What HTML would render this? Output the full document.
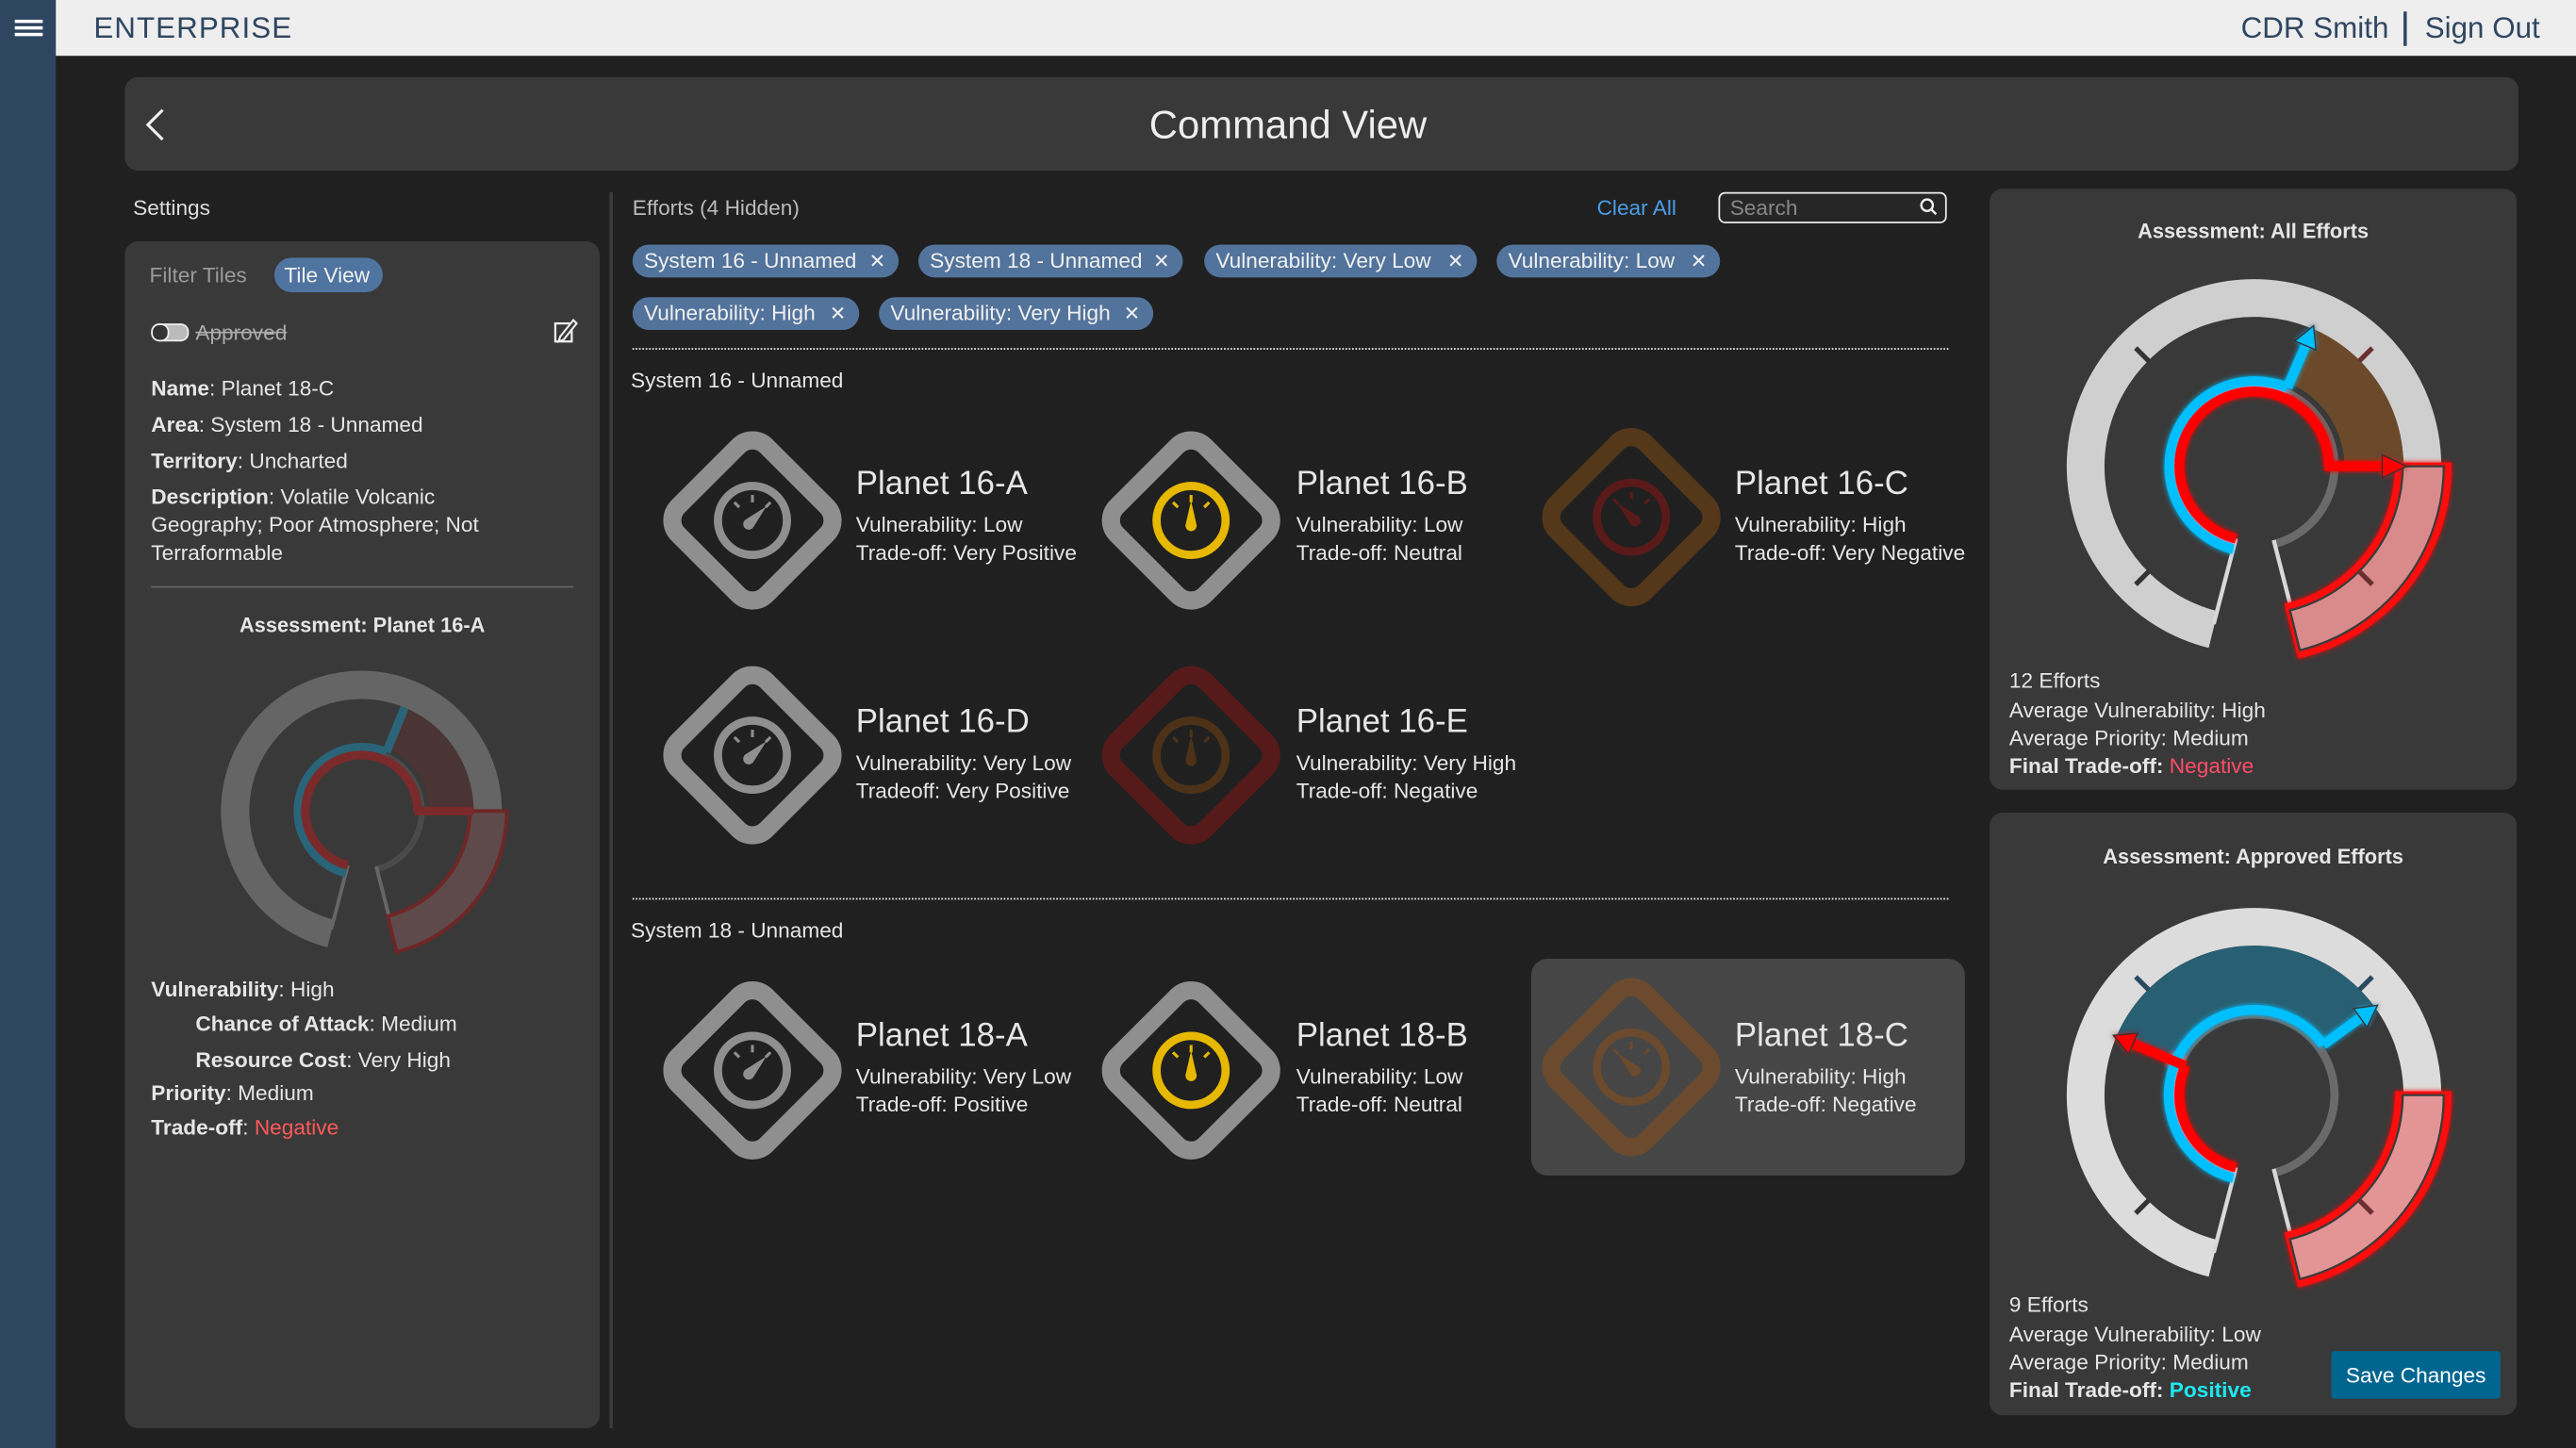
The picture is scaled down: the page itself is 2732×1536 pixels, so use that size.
<!DOCTYPE html>
<html><head><meta charset="utf-8">
<style>
html,body{margin:0;padding:0;background:#202020;width:2732px;height:1536px;overflow:hidden}
#r{position:absolute;left:0;top:0;width:1568px;height:882px;transform:scale(1.74235,1.7415);transform-origin:0 0;background:#202020;font-family:"Liberation Sans",sans-serif;color:#e6e6e6}
.a{position:absolute;white-space:nowrap;line-height:1}
.s13{font-size:13px}
b{font-weight:bold}
.tag{position:absolute;height:20px;line-height:20px;background:#52739b;border-radius:10px;color:#f0f0f0;font-size:13px;padding-left:7px;box-sizing:border-box}
.tag i{font-style:normal;position:absolute;right:8px;top:0;font-size:12px}
.card{position:absolute;background:#393939;border-radius:8px}
</style></head><body><div id="r">
<div style="position:absolute;left:0;top:0;width:1568px;height:34px;background:#eeeeee"></div>
<div style="position:absolute;left:0;top:0;width:34px;height:882px;background:#2f4661"></div>
<div style="position:absolute;left:9px;top:12px;width:17px;height:1.5px;background:#fff"></div>
<div style="position:absolute;left:9px;top:16px;width:17px;height:1.5px;background:#fff"></div>
<div style="position:absolute;left:9px;top:20px;width:17px;height:1.5px;background:#fff"></div>
<div class="a" style="left:57px;top:8px;font-size:18px;color:#2f4661;letter-spacing:0.6px">ENTERPRISE</div>
<div class="a" style="left:1364px;top:8px;font-size:18px;color:#2f4661">CDR Smith</div>
<div style="position:absolute;left:1463px;top:7px;width:1.5px;height:21px;background:#2f4661"></div>
<div class="a" style="left:1476px;top:8px;font-size:18px;color:#2f4661">Sign Out</div>

<div class="card" style="left:76px;top:47px;width:1457px;height:57px"></div>
<div class="a" style="left:0;width:1568px;text-align:center;top:65px;font-size:24px;color:#eee">Command View</div>

<div class="a s13" style="left:81px;top:120px;color:#ddd">Settings</div>
<div class="card" style="left:76px;top:147px;width:289px;height:723px"></div>
<div style="position:absolute;left:371px;top:117px;width:2px;height:753px;background:#3c3c3c"></div>

<div class="a s13" style="left:91px;top:161px;color:#9a9a9a">Filter Tiles</div>
<div style="position:absolute;left:167px;top:157px;width:66px;height:21px;border-radius:11px;background:#4f74a0"></div>
<div class="a s13" style="left:173px;top:161px;color:#f2f2f2">Tile View</div>
<div style="position:absolute;left:92px;top:197px;width:21px;height:9px;border-radius:5px;background:#bbb;border:1px solid #eee"></div>
<div style="position:absolute;left:92px;top:197px;width:9px;height:9px;border-radius:5px;background:#333;border:1px solid #eee"></div>
<div class="a s13" style="left:119px;top:196px;color:#aaa;text-decoration:line-through">Approved</div>

<div class="a s13" style="left:92px;top:230px"><b>Name</b>: Planet 18-C</div>
<div class="a s13" style="left:92px;top:252px"><b>Area</b>: System 18 - Unnamed</div>
<div class="a s13" style="left:92px;top:274px"><b>Territory</b>: Uncharted</div>
<div class="a s13" style="left:92px;top:296px"><b>Description</b>: Volatile Volcanic</div>
<div class="a s13" style="left:92px;top:313px">Geography; Poor Atmosphere; Not</div>
<div class="a s13" style="left:92px;top:330px">Terraformable</div>
<div style="position:absolute;left:92px;top:357px;width:257px;height:1px;background:#666"></div>
<div class="a" style="left:76px;width:289px;text-align:center;top:375px;font-size:12.5px;font-weight:bold">Assessment: Planet 16-A</div>
<div class="a s13" style="left:92px;top:596px"><b>Vulnerability</b>: High</div>
<div class="a s13" style="left:119px;top:617px"><b>Chance of Attack</b>: Medium</div>
<div class="a s13" style="left:119px;top:639px"><b>Resource Cost</b>: Very High</div>
<div class="a s13" style="left:92px;top:659px"><b>Priority</b>: Medium</div>
<div class="a s13" style="left:92px;top:680px"><b>Trade-off</b>: <span style="color:#ff5a5a">Negative</span></div>

<div class="a s13" style="left:385px;top:120px;color:#bbb">Efforts (4 Hidden)</div>
<div class="a s13" style="left:972px;top:120px;color:#4a9ee8">Clear All</div>
<div style="position:absolute;left:1046px;top:117px;width:139px;height:19px;border:1.5px solid #eee;border-radius:4px;box-sizing:border-box;background:#262626"></div>
<div class="a s13" style="left:1053px;top:120px;color:#888">Search</div>

<div class="tag" style="left:385px;top:149px;width:162px">System 16 - Unnamed<i>✕</i></div>
<div class="tag" style="left:559px;top:149px;width:161px">System 18 - Unnamed<i>✕</i></div>
<div class="tag" style="left:733px;top:149px;width:166px">Vulnerability: Very Low<i>✕</i></div>
<div class="tag" style="left:911px;top:149px;width:136px">Vulnerability: Low<i>✕</i></div>
<div class="tag" style="left:385px;top:181px;width:138px">Vulnerability: High<i>✕</i></div>
<div class="tag" style="left:535px;top:181px;width:167px">Vulnerability: Very High<i>✕</i></div>

<div style="position:absolute;left:385px;top:212px;width:801px;border-top:1.5px dotted #eee"></div>
<div class="a s13" style="left:384px;top:225px">System 16 - Unnamed</div>
<div style="position:absolute;left:385px;top:547px;width:801px;border-top:1.5px dotted #eee"></div>
<div class="a s13" style="left:384px;top:560px">System 18 - Unnamed</div>
<div style="position:absolute;left:932px;top:584px;width:264px;height:132px;background:#464646;border-radius:10px"></div>

<div class="card" style="left:1211px;top:115px;width:321px;height:366px"></div>
<div class="card" style="left:1211px;top:495px;width:321px;height:367px"></div>
<div class="a" style="left:1211px;width:321px;text-align:center;top:135px;font-size:12.5px;font-weight:bold">Assessment: All Efforts</div>
<div class="a" style="left:1211px;width:321px;text-align:center;top:516px;font-size:12.5px;font-weight:bold">Assessment: Approved Efforts</div>
<div class="a s13" style="left:1223px;top:408px">12 Efforts</div>
<div class="a s13" style="left:1223px;top:426px">Average Vulnerability: High</div>
<div class="a s13" style="left:1223px;top:443px">Average Priority: Medium</div>
<div class="a s13" style="left:1223px;top:460px"><b>Final Trade-off:</b> <span style="color:#ff4d6a">Negative</span></div>
<div class="a s13" style="left:1223px;top:788px">9 Efforts</div>
<div class="a s13" style="left:1223px;top:806px">Average Vulnerability: Low</div>
<div class="a s13" style="left:1223px;top:823px">Average Priority: Medium</div>
<div class="a s13" style="left:1223px;top:840px"><b>Final Trade-off:</b> <span style="color:#1ee8f0;font-weight:bold">Positive</span></div>
<div style="position:absolute;left:1419px;top:823px;width:103px;height:29px;background:#006690;border-radius:2px"></div>
<div class="a s13" style="left:1419px;width:103px;text-align:center;top:831px;color:#fff">Save Changes</div>

<div class="a" style="left:521px;top:285px;font-size:20px">Planet 16-A</div>
<div class="a s13" style="left:521px;top:313px">Vulnerability: Low</div>
<div class="a s13" style="left:521px;top:330px">Trade-off: Very Positive</div>
<div class="a" style="left:789px;top:285px;font-size:20px">Planet 16-B</div>
<div class="a s13" style="left:789px;top:313px">Vulnerability: Low</div>
<div class="a s13" style="left:789px;top:330px">Trade-off: Neutral</div>
<div class="a" style="left:1056px;top:285px;font-size:20px">Planet 16-C</div>
<div class="a s13" style="left:1056px;top:313px">Vulnerability: High</div>
<div class="a s13" style="left:1056px;top:330px">Trade-off: Very Negative</div>
<div class="a" style="left:521px;top:430px;font-size:20px">Planet 16-D</div>
<div class="a s13" style="left:521px;top:458px">Vulnerability: Very Low</div>
<div class="a s13" style="left:521px;top:475px">Tradeoff: Very Positive</div>
<div class="a" style="left:789px;top:430px;font-size:20px">Planet 16-E</div>
<div class="a s13" style="left:789px;top:458px">Vulnerability: Very High</div>
<div class="a s13" style="left:789px;top:475px">Trade-off: Negative</div>
<div class="a" style="left:521px;top:621px;font-size:20px">Planet 18-A</div>
<div class="a s13" style="left:521px;top:649px">Vulnerability: Very Low</div>
<div class="a s13" style="left:521px;top:666px">Trade-off: Positive</div>
<div class="a" style="left:789px;top:621px;font-size:20px">Planet 18-B</div>
<div class="a s13" style="left:789px;top:649px">Vulnerability: Low</div>
<div class="a s13" style="left:789px;top:666px">Trade-off: Neutral</div>
<div class="a" style="left:1056px;top:621px;font-size:20px">Planet 18-C</div>
<div class="a s13" style="left:1056px;top:649px">Vulnerability: High</div>
<div class="a s13" style="left:1056px;top:666px">Trade-off: Negative</div>

<svg style="position:absolute;left:0;top:0" width="1568" height="882" viewBox="0 0 1568 882">
<defs>
<g id="dia"><rect x="-38" y="-38" width="76" height="76" rx="12" transform="rotate(45)" fill="none" stroke="currentColor" stroke-width="11"/></g>
<g id="gau"><circle r="21" fill="none" stroke="currentColor" stroke-width="5"/>
<g stroke="currentColor" stroke-width="1.8"><line x1="0" y1="-15.5" x2="0" y2="-11"/><line x1="-11" y1="-11" x2="-8" y2="-8"/><line x1="11" y1="-11" x2="8" y2="-8"/></g></g>
<path id="nd" d="M-3.2,2 L0,-12 L3.2,2 A3.4,3.4 0 1 1 -3.2,2 Z" fill="currentColor"/>
<filter id="gl" x="-20%" y="-20%" width="140%" height="140%"><feGaussianBlur stdDeviation="1.5" result="b"/><feMerge><feMergeNode in="b"/><feMergeNode in="SourceGraphic"/></feMerge></filter>
</defs>
<polyline points="99,67 90,76 99,85" fill="none" stroke="#eee" stroke-width="1.8"/>
<circle cx="1173" cy="125" r="3.5" fill="none" stroke="#eee" stroke-width="1.4"/><line x1="1175.5" y1="127.5" x2="1178.5" y2="130.5" stroke="#eee" stroke-width="1.4"/>
<rect x="338" y="197" width="10" height="11" fill="none" stroke="#eee" stroke-width="1.3"/>
<path d="M341,205 L349,195 L351,197 L343,207 L340,208 Z" fill="#393939" stroke="#eee" stroke-width="1.2"/>

<g transform="translate(458,317)" color="#8f8f8f"><use href="#dia"/><use href="#gau"/><use href="#nd" transform="rotate(45)"/></g>
<g transform="translate(725,317)"><use href="#dia" color="#8f8f8f"/><g color="#e6b800"><use href="#gau"/><use href="#nd"/></g></g>
<g transform="translate(993,315)"><use href="#dia" color="#553719"/><g color="#5a1a1a"><use href="#gau"/><use href="#nd" transform="rotate(-45)"/></g></g>
<g transform="translate(458,460)" color="#8f8f8f"><use href="#dia"/><use href="#gau"/><use href="#nd" transform="rotate(45)"/></g>
<g transform="translate(725,460)"><use href="#dia" color="#561a1a"/><g color="#4d3218"><use href="#gau"/><use href="#nd"/></g></g>
<g transform="translate(458,652)" color="#8f8f8f"><use href="#dia"/><use href="#gau"/><use href="#nd" transform="rotate(45)"/></g>
<g transform="translate(725,652)"><use href="#dia" color="#8f8f8f"/><g color="#e6b800"><use href="#gau"/><use href="#nd"/></g></g>
<g transform="translate(993,650)" color="#6b4a2e"><use href="#dia"/><use href="#gau"/><use href="#nd" transform="rotate(-45)"/></g>

<g transform="translate(1372,284)">
<path d="M-24.8,99.5 A102.5 102.5 0 1 1 102.5,0" fill="none" stroke="#cfcfcf" stroke-width="23"/>
<path d="M35.6,-83.8 A91 91 0 0 1 91,0 L55,0 A55 55 0 0 0 21.5,-50.6 Z" fill="#6b4a2b"/>
<g stroke-width="3"><line x1="-64" y1="-64" x2="-72" y2="-72" stroke="#333"/><line x1="64" y1="-64" x2="72" y2="-72" stroke="#6a3030"/><line x1="-64" y1="64" x2="-72" y2="72" stroke="#333"/></g>
<path d="M-11.85,47.5 A49 49 0 1 1 11.85,47.5" fill="none" stroke="#6a6a6a" stroke-width="5"/>
<line x1="-11" y1="44" x2="-24.5" y2="96" stroke="#d8d8d8" stroke-width="2.5"/>
<line x1="12" y1="45" x2="23" y2="88" stroke="#d8d8d8" stroke-width="2.5"/>
<path d="M118,0 A118 118 0 0 1 28.5,114.5 L21.3,85.4 A88 88 0 0 0 88,0 Z" fill="#d98b8b" stroke="#ff1010" stroke-width="4.5" filter="url(#gl)"/>
<path d="M115.5,0 A115.5 115.5 0 0 1 27.9,112.1 L21.9,87.8 A90.5 90.5 0 0 0 90.5,0 Z" fill="#d98b8b" stroke="#3a3a3a" stroke-width="1.3"/>
<line x1="64" y1="64" x2="72" y2="72" stroke="#6a3030" stroke-width="3"/>
<g filter="url(#gl)">
<path d="M-12.6,50.5 A52 52 0 1 1 20.3,-47.9" fill="none" stroke="#00bfff" stroke-width="6"/>
<line x1="20.3" y1="-47.9" x2="32" y2="-75" stroke="#00bfff" stroke-width="6"/>
<polygon points="36.3,-85.6 37.7,-70.9 24.8,-76.3" fill="#00bfff" stroke="#333" stroke-width="0.8"/>
<path d="M-11,44.1 A45.5 45.5 0 1 1 45.5,0" fill="none" stroke="#ff0000" stroke-width="6"/>
<line x1="43" y1="0" x2="80" y2="0" stroke="#ff0000" stroke-width="6"/>
<polygon points="93,0 78,-7 78,7" fill="#ff0000" stroke="#333" stroke-width="0.8"/>
</g>
</g>

<g transform="translate(1372,667)">
<path d="M-24.8,99.5 A102.5 102.5 0 1 1 102.5,0" fill="none" stroke="#dcdcdc" stroke-width="23"/>
<path d="M-83.8,-35.6 A91 91 0 0 1 71.7,-56 L43.3,-33.9 A55 55 0 0 0 -50.6,-21.5 Z" fill="#285f72"/>
<g stroke-width="3"><line x1="-64" y1="-64" x2="-72" y2="-72" stroke="#2c4a5f"/><line x1="64" y1="-64" x2="72" y2="-72" stroke="#2c4a5f"/><line x1="-64" y1="64" x2="-72" y2="72" stroke="#333"/></g>
<path d="M-11.85,47.5 A49 49 0 1 1 11.85,47.5" fill="none" stroke="#6a6a6a" stroke-width="5"/>
<line x1="-11" y1="44" x2="-24.5" y2="96" stroke="#d8d8d8" stroke-width="2.5"/>
<line x1="12" y1="45" x2="23" y2="88" stroke="#d8d8d8" stroke-width="2.5"/>
<path d="M118,0 A118 118 0 0 1 28.5,114.5 L21.3,85.4 A88 88 0 0 0 88,0 Z" fill="#e39595" stroke="#ff1010" stroke-width="4.5" filter="url(#gl)"/>
<path d="M115.5,0 A115.5 115.5 0 0 1 27.9,112.1 L21.9,87.8 A90.5 90.5 0 0 0 90.5,0 Z" fill="#e39595" stroke="#3a3a3a" stroke-width="1.3"/>
<line x1="64" y1="64" x2="72" y2="72" stroke="#6a3030" stroke-width="3"/>
<g filter="url(#gl)">
<path d="M-12.6,50.5 A52 52 0 1 1 42.1,-30.6" fill="none" stroke="#00bfff" stroke-width="6"/>
<line x1="42.1" y1="-30.6" x2="66" y2="-48" stroke="#00bfff" stroke-width="6"/>
<polygon points="75.2,-54.7 68.8,-41.3 60.6,-52.7" fill="#00bfff" stroke="#333" stroke-width="0.8"/>
<path d="M-11,44.1 A45.5 45.5 0 0 1 -41.9,-17.8" fill="none" stroke="#ff0000" stroke-width="6"/>
<line x1="-41.9" y1="-17.8" x2="-75" y2="-31.8" stroke="#ff0000" stroke-width="6"/>
<polygon points="-85.6,-36.3 -70.9,-37.7 -76.3,-24.9" fill="#ff0000" stroke="#333" stroke-width="0.8"/>
</g>
</g>

<g transform="translate(220,494) scale(0.75)">
<path d="M-24.8,99.5 A102.5 102.5 0 1 1 102.5,0" fill="none" stroke="#656565" stroke-width="23"/>
<path d="M35.6,-83.8 A91 91 0 0 1 91,0 L55,0 A55 55 0 0 0 21.5,-50.6 Z" fill="#4a3434"/>
<path d="M-11.85,47.5 A49 49 0 1 1 11.85,47.5" fill="none" stroke="#4a4a4a" stroke-width="5"/>
<line x1="-11" y1="44" x2="-24.5" y2="96" stroke="#666" stroke-width="3"/>
<line x1="12" y1="45" x2="23" y2="88" stroke="#666" stroke-width="3"/>
<path d="M118,0 A118 118 0 0 1 28.5,114.5 L21.3,85.4 A88 88 0 0 0 88,0 Z" fill="#5e4a4a" stroke="#6e2626" stroke-width="3"/>
<path d="M-12.6,50.5 A52 52 0 1 1 20.3,-47.9" fill="none" stroke="#2a6478" stroke-width="7"/>
<line x1="20.3" y1="-47.9" x2="35" y2="-84" stroke="#2a6478" stroke-width="7"/>
<path d="M-11,44.1 A45.5 45.5 0 1 1 45.5,0" fill="none" stroke="#7a2a2a" stroke-width="7"/>
<line x1="43" y1="0" x2="91" y2="0" stroke="#7a2a2a" stroke-width="7"/>
</g>
</svg>
</div></body></html>
